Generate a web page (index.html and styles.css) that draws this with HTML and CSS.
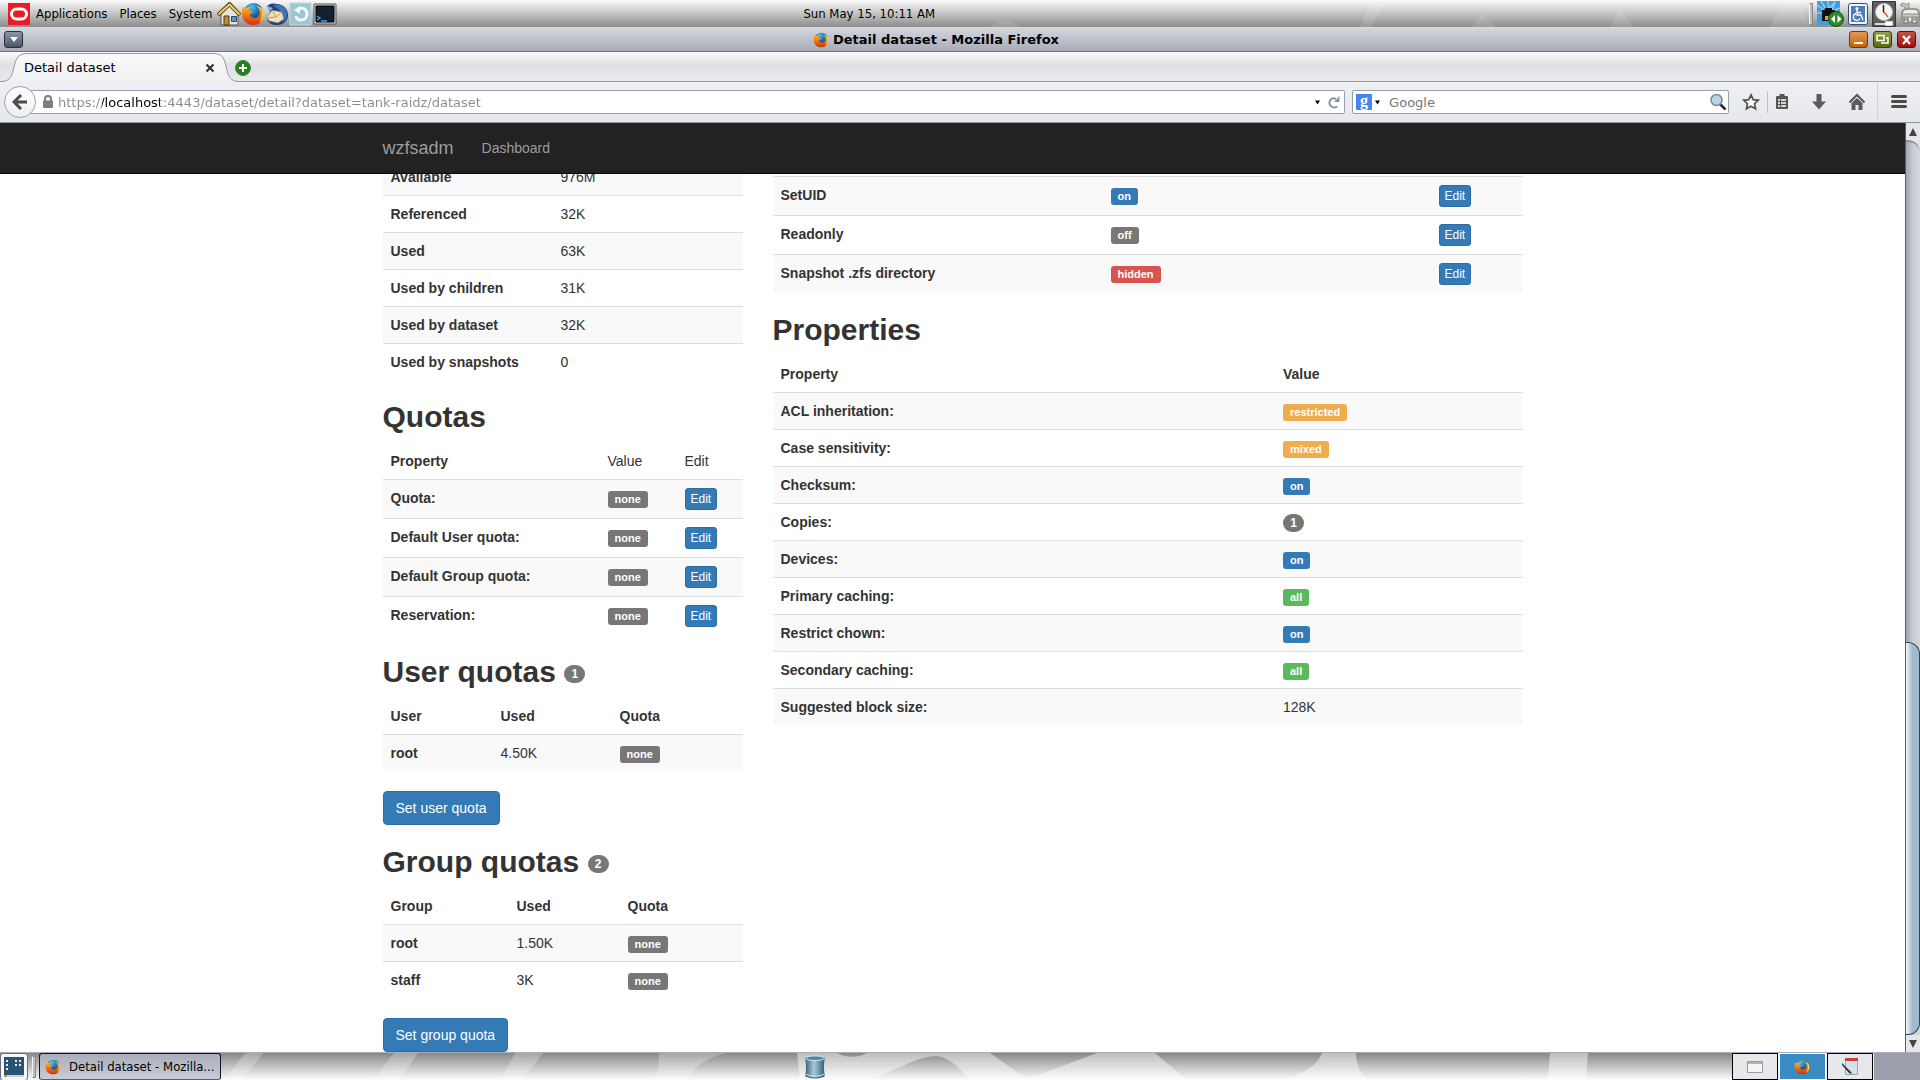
FILE: index.html
```html
<!DOCTYPE html>
<html lang="en">
<head>
<meta charset="utf-8">
<title>Detail dataset</title>
<link rel="stylesheet" href="styles.css">
</head>
<body>
<svg class="defs" width="0" height="0" aria-hidden="true">
  <defs>
    <linearGradient id="fx-fire" x1="0" y1="0" x2="0" y2="1"><stop offset="0" stop-color="#ffc52e"/><stop offset=".45" stop-color="#f57c16"/><stop offset="1" stop-color="#c9321a"/></linearGradient>
    <radialGradient id="fx-globe" cx=".4" cy=".2" r=".8"><stop offset="0" stop-color="#4fc0ee"/><stop offset=".5" stop-color="#1b6cb0"/><stop offset="1" stop-color="#0e2a5c"/></radialGradient>
    <linearGradient id="tab-fill" x1="0" y1="0" x2="0" y2="1"><stop offset="0" stop-color="#fafafb"/><stop offset="1" stop-color="#eeeff2"/></linearGradient>
    <linearGradient id="can-fill"><stop offset="0" stop-color="#3d6a85"/><stop offset=".45" stop-color="#a9cbdc"/><stop offset="1" stop-color="#35627e"/></linearGradient>
    <symbol id="firefox" viewBox="0 0 24 24">
      <circle cx="12.5" cy="11" r="10" fill="url(#fx-globe)"/>
      <path d="M2 4c.5 1 1 2 2 2.500C6 5 8 5 9.500 5.500 8 6.500 8 8 9 9l3 .5c0 1.500-2 2-3 3 0 3 4 4.500 7 3 2.500-1.500 3-4 2.500-6.500C18 6.500 17 5 15.500 3.500 21 5 23.500 9 23 13.500 22.500 19.500 18 23 12 23 5.500 23 1 18 1 12c0-3 .3-6 1-8z" fill="url(#fx-fire)"/>
      <path d="M19.500 4.500C24 9 24 17 18.500 20.500 21.500 16 22 9 19.500 4.500z" fill="#ffe04a"/>
    </symbol>
  </defs>
</svg>

<header class="panel">
  <svg class="panel-art" viewBox="0 0 1920 28" preserveAspectRatio="none" aria-hidden="true"><path d="M990 28q15-12 30 0zM1360 28l10-24h14l-12 24zM1472 28l10-14 14 14zM1610 28l10-20 14 20zM1770 28q16-40 30-24l10 24z" fill="#fff" opacity=".12"/></svg>
  <nav class="menus">
    <button class="menu oracle" aria-label="Main menu"><svg width="22" height="22" viewBox="0 0 22 22"><path fill="#ea1b22" d="M0 0h22v22H0z"/><rect x="3.500" y="6" width="15" height="10" rx="5" fill="none" stroke="#fff" stroke-width="3"/></svg></button>
    <button class="menu">Applications</button>
    <button class="menu">Places</button>
    <button class="menu">System</button>
  </nav>
  <div class="launchers">
    <button aria-label="Home"><svg width="24" height="24" viewBox="0 0 24 24"><path d="M4 12v11h17V12l-8.500-8z" fill="#e6e4dc" stroke="#555"/><path d="M7 14h5v9H7z" fill="#b98b41" stroke="#4d3a17"/><path d="M14.500 14.500h5v5h-5z" fill="#5b93c7" stroke="#234d79"/><path d="M1 13 12.500 2 23 13" fill="none" stroke="#5d4a10" stroke-width="4"/><path d="M1.500 12.500 12.500 2.500 22.500 12.500" fill="none" stroke="#e7cf73" stroke-width="2"/></svg></button>
    <button aria-label="Firefox"><svg width="24" height="24"><use href="#firefox"/></svg></button>
    <button aria-label="Thunderbird"><svg width="24" height="24" viewBox="0 0 24 24"><path d="M2 4C5 1 9 1 12 2c6 0 11 5 11 11 0 5-4 10-11 10-5 0-8-2-10-5l6-2z" fill="#1d3f86"/><path d="M8 3c7-2 13 2 14 8 0 5-2 8-5 10 1-5 1-10-3-13z" fill="#3f73bb"/><path d="M2 3c2 2 4 2 6 3L5 9C3 8 2 6 2 3z" fill="#7fb1e3"/><path d="m2 15 5-7 10 2 2 7-6 4-9-2z" fill="#f0dfbb" stroke="#7c6a4a" stroke-width=".6"/><path d="m7 8 4 7 6-5M11 15l-8 1" fill="none" stroke="#b99f6e"/></svg></button>
    <button aria-label="Updates"><svg width="24" height="24" viewBox="0 0 24 24"><path d="M1 1h21v22H1z" fill="#9cc6d4" stroke="#c4dce4"/><path d="M9 7c6-2 9 1 9 5s-3 6-6 6-5-2-5-4" fill="none" stroke="#f3fafc" stroke-width="3"/><path d="m5 8 6-4v8z" fill="#f3fafc"/></svg></button>
    <button aria-label="Terminal"><svg width="24" height="24" viewBox="0 0 24 24"><path d="M1 2h22v20H1z" fill="#d8d8d8" stroke="#555"/><path d="M3 4h18v16H3z" fill="#12202f" stroke="#000"/><path d="m4 14 3 2-3 2M8 19h6" fill="none" stroke="#3fa0ef" stroke-width="1.500"/></svg></button>
  </div>
  <div class="clock"><time>Sun May 15, 10:11 AM</time></div>
  <div class="tray">
    <span class="grip"></span>
    <svg width="27" height="26" viewBox="0 0 27 26"><path d="M0 0h23v24H0z" fill="#3f9fdc"/><path d="m11 0 1 8 6-7-3 9 8-3M0 4l7 5M4 0l4 7M0 12h6" stroke="#8fcdf2" stroke-width="1.500" fill="none"/><path d="M5 9h3V7h7v2h3v11H5z" fill="#111"/><path d="M8 15h7v4H8z" fill="#caa05a"/><circle cx="19" cy="18" r="7.500" fill="#2c8b26" stroke="#175214"/><path d="m18 14-4 4 4 4zM20.500 14l4 4-4 4z" fill="#fff"/></svg>
    <svg width="20" height="24" viewBox="0 0 20 24"><rect x=".5" y="1.500" width="19" height="21" rx="2" fill="#f0f4f8" stroke="#2d4d7c"/><path d="M3 4h14v16H3z" fill="#4f7db8"/><circle cx="9" cy="6.500" r="1.500" fill="#fff"/><path d="M9 8v5h4l2 5M9 10.500h4M8 11.500a3.500 3.500 0 1 0 4 5" fill="none" stroke="#fff" stroke-width="1.300"/></svg>
    <svg width="24" height="26" viewBox="0 0 24 26"><path d="M.5.500h23v25H.5z" fill="#5c5d5f" stroke="#333"/><circle cx="12" cy="11" r="8.500" fill="#f4f4f4" stroke="#bbb"/><path d="M11.500 4v7.500" stroke="#222" stroke-width="1.500"/><path d="m12 11 4 5" stroke="#d35b33" stroke-width="1.500"/><path d="M3 23h11M14 21h6v3h-6z" stroke="#fff" stroke-width="1.500" fill="#fff"/></svg>
    <svg width="20" height="26" viewBox="0 0 20 26"><path d="M2 20v-7q0-5 5-5h7q5 0 5 5v7M4 14v8h4v-8M12 14v8h5v-8" fill="#ededea" stroke="#84847f" stroke-width="1.500"/><path d="M1 3q4-2 5 1l3-2v5H5Q4 4 1 5zM2 13h17v3H2z" fill="#c9c9c5" stroke="#8f8f8a"/></svg>
  </div>
</header>

<section class="window">
  <div class="titlebar">
    <button class="win-btn win-menu" aria-label="Window menu"><svg width="19" height="17" viewBox="0 0 19 17"><path d="M6 6h8l-4 5z" fill="#fff"/></svg></button>
    <h1 class="win-title"><svg width="16" height="16"><use href="#firefox"/></svg>Detail dataset - Mozilla Firefox</h1>
    <div class="win-controls">
      <button class="win-btn win-min" aria-label="Minimize"><svg width="17" height="15" viewBox="0 0 17 15"><path d="M4 10h9v2H4z" fill="#fff"/></svg></button>
      <button class="win-btn win-max" aria-label="Restore"><svg width="17" height="15" viewBox="0 0 17 15"><path d="M3 3.500h7v5H3zM12 6h2v5H8v-1" fill="none" stroke="#fff" stroke-width="1.500"/></svg></button>
      <button class="win-btn win-close" aria-label="Close"><svg width="17" height="15" viewBox="0 0 17 15"><path d="m5 4 7 8M12 4l-7 8" stroke="#fff" stroke-width="2.200"/></svg></button>
    </div>
  </div>

  <div class="tabstrip">
    <div class="tab">
      <svg class="tab-shape" width="240" height="30" viewBox="0 0 240 30" aria-hidden="true"><path d="M0 29.500h1C11 29.500 12 23 14 15 16 6 18 1.500 28 1.500H213c10 0 11 5 13 13 2 9 4 15 13 15V30H0z" fill="url(#tab-fill)"/><path d="M0 29.500h1C11 29.500 12 23 14 15 16 6 18 1.500 28 1.500H213c10 0 11 5 13 13 2 9 4 15 13 15" fill="none" stroke="#97999c"/></svg>
      <span class="tab-label">Detail dataset</span>
      <button class="icon-btn" aria-label="Close tab"><svg width="10" height="10" viewBox="0 0 10 10"><path d="m1.500 1.500 7 7M8.500 1.500l-7 7" stroke="#333" stroke-width="2.200"/></svg></button>
    </div>
    <button class="icon-btn new-tab" aria-label="New tab"><svg width="16" height="16" viewBox="0 0 16 16"><circle cx="8" cy="8" r="7.500" fill="#23801c" stroke="#3f8a38"/><path d="M8 4v8M4 8h8" stroke="#fff" stroke-width="2"/></svg></button>
  </div>

  <div class="toolbar">
    <button class="back" aria-label="Back"><svg width="16" height="16" viewBox="0 0 16 16"><path d="M9 1 2 8l7 7M3 8h12" fill="none" stroke="#4c4c4c" stroke-width="3"/></svg></button>
    <div class="field urlbar">
      <svg width="12" height="14" viewBox="0 0 12 14"><path d="M3 6V4q0-3 3-3t3 3v2" fill="none" stroke="#7d7d7d" stroke-width="2"/><rect x="1" y="5.500" width="10" height="7.500" rx="1" fill="#7d7d7d"/></svg>
      <input class="url-input" aria-label="Address" value="https://localhost:4443/dataset/detail?dataset=tank-raidz/dataset">
      <button class="icon-btn" aria-label="History"><svg width="5" height="5" viewBox="0 0 6 5"><path d="M0 0h6L3 5z"/></svg></button>
      <button class="icon-btn reload" aria-label="Reload"><svg width="12" height="13" viewBox="0 0 12 13"><path d="M8 3C4 1 1 4 1.500 7.500 2 11 6 12.500 9.500 10.500" fill="none" stroke="#8595a3" stroke-width="2"/><path d="M6 6h5.500V0z" fill="#8595a3"/></svg></button>
    </div>
    <div class="field searchbar">
      <button class="icon-btn engine" aria-label="Search engine"><span class="g">g</span><svg width="5" height="5" viewBox="0 0 6 5"><path d="M0 0h6L3 5z"/></svg></button>
      <input class="search-input" aria-label="Search" placeholder="Google">
      <button class="icon-btn" aria-label="Go"><svg width="18" height="18" viewBox="0 0 18 18"><path d="m11 11 5.500 5.500" stroke="#2b2b2b" stroke-width="2.500"/><circle cx="7.500" cy="7" r="5.500" fill="#b7d5ea" stroke="#7e8890" stroke-width="1.500"/></svg></button>
    </div>
    <div class="tools">
      <button class="icon-btn" aria-label="Bookmark"><svg width="18" height="18" viewBox="0 0 18 18"><path d="m9 2 2.200 4.700 5 .6-3.700 3.400 1 5L9 13.200l-4.500 2.500 1-5L1.800 7.300l5-.6z" fill="#fff" stroke="#555" stroke-width="1.800"/></svg></button>
      <span class="split"></span>
      <button class="icon-btn" aria-label="Bookmarks list"><svg width="16" height="18" viewBox="0 0 16 18"><rect x="2" y="3" width="12" height="13" rx="1" fill="#555"/><path d="M5.500 1h5v4h-5z" fill="#555"/><path d="M4 7h2M7 7h5M4 10h2M7 10h5M4 13h2M7 13h5" stroke="#fff" stroke-width="1.600"/></svg></button>
      <button class="icon-btn" aria-label="Downloads"><svg width="16" height="18" viewBox="0 0 16 18"><path d="M5.500 1h5v7.500H15L8 16.500 1 8.500h4.500z" fill="#5c5c5c"/></svg></button>
      <button class="icon-btn" aria-label="Home page"><svg width="18" height="18" viewBox="0 0 18 18"><path d="M1.500 9.500 9 2l7.500 7.500" fill="none" stroke="#555" stroke-width="2"/><path d="M3.500 10 9 5l5.500 5v7h-4v-5h-3v5h-4z" fill="#5c5c5c"/></svg></button>
      <span class="rule"></span>
      <button class="icon-btn" aria-label="Menu"><svg width="16" height="18" viewBox="0 0 16 18"><path d="M1.500 3.500h13M1.500 8.500h13M1.500 13.500h13" stroke="#4a4a4a" stroke-width="3" stroke-linecap="round"/></svg></button>
    </div>
  </div>

  <div class="viewport">
    <div class="page">
      <nav class="navbar"><div class="container">
        <a class="brand" href="#">wzfsadm</a>
        <a class="nav-link" href="#">Dashboard</a>
      </div></nav>
      <main class="container content">
        <div class="col-side">
          <table class="table stats">
            <tbody>
              <tr><th scope="row">Available</th><td>976M</td></tr>
              <tr><th scope="row">Referenced</th><td>32K</td></tr>
              <tr><th scope="row">Used</th><td>63K</td></tr>
              <tr><th scope="row">Used by children</th><td>31K</td></tr>
              <tr><th scope="row">Used by dataset</th><td>32K</td></tr>
              <tr><th scope="row">Used by snapshots</th><td>0</td></tr>
            </tbody>
          </table>
          <h2>Quotas</h2>
          <table class="table quotas">
            <thead><tr><th>Property</th><td>Value</td><td>Edit</td></tr></thead>
            <tbody>
              <tr><th scope="row">Quota:</th><td><span class="label">none</span></td><td><button class="btn btn-xs">Edit</button></td></tr>
              <tr><th scope="row">Default User quota:</th><td><span class="label">none</span></td><td><button class="btn btn-xs">Edit</button></td></tr>
              <tr><th scope="row">Default Group quota:</th><td><span class="label">none</span></td><td><button class="btn btn-xs">Edit</button></td></tr>
              <tr><th scope="row">Reservation:</th><td><span class="label">none</span></td><td><button class="btn btn-xs">Edit</button></td></tr>
            </tbody>
          </table>
          <h2>User quotas <span class="badge">1</span></h2>
          <table class="table users">
            <thead><tr><th>User</th><th>Used</th><th>Quota</th></tr></thead>
            <tbody>
              <tr><th scope="row">root</th><td>4.50K</td><td><span class="label">none</span></td></tr>
            </tbody>
          </table>
          <button class="btn">Set user quota</button>
          <h2>Group quotas <span class="badge">2</span></h2>
          <table class="table groups">
            <thead><tr><th>Group</th><th>Used</th><th>Quota</th></tr></thead>
            <tbody>
              <tr><th scope="row">root</th><td>1.50K</td><td><span class="label">none</span></td></tr>
              <tr><th scope="row">staff</th><td>3K</td><td><span class="label">none</span></td></tr>
            </tbody>
          </table>
          <button class="btn">Set group quota</button>
        </div>
        <div class="col-main">
          <table class="table flags">
            <tbody>
              <tr><th scope="row">SetUID</th><td><span class="label primary">on</span></td><td><button class="btn btn-xs">Edit</button></td></tr>
              <tr><th scope="row">Readonly</th><td><span class="label">off</span></td><td><button class="btn btn-xs">Edit</button></td></tr>
              <tr><th scope="row">Snapshot .zfs directory</th><td><span class="label danger">hidden</span></td><td><button class="btn btn-xs">Edit</button></td></tr>
            </tbody>
          </table>
          <h2>Properties</h2>
          <table class="table props">
            <thead><tr><th>Property</th><th>Value</th></tr></thead>
            <tbody>
              <tr><th scope="row">ACL inheritation:</th><td><span class="label warning">restricted</span></td></tr>
              <tr><th scope="row">Case sensitivity:</th><td><span class="label warning">mixed</span></td></tr>
              <tr><th scope="row">Checksum:</th><td><span class="label primary">on</span></td></tr>
              <tr><th scope="row">Copies:</th><td><span class="badge">1</span></td></tr>
              <tr><th scope="row">Devices:</th><td><span class="label primary">on</span></td></tr>
              <tr><th scope="row">Primary caching:</th><td><span class="label success">all</span></td></tr>
              <tr><th scope="row">Restrict chown:</th><td><span class="label primary">on</span></td></tr>
              <tr><th scope="row">Secondary caching:</th><td><span class="label success">all</span></td></tr>
              <tr><th scope="row">Suggested block size:</th><td>128K</td></tr>
            </tbody>
          </table>
        </div>
      </main>
    </div>
    <div class="scrollbar" aria-hidden="true">
      <div class="arrow"><svg width="8" height="8" viewBox="0 0 8 8"><path d="M0 8h8L4 0z" fill="#444"/></svg></div>
      <div class="track"><div class="thumb"></div></div>
      <div class="arrow"><svg width="8" height="8" viewBox="0 0 8 8"><path d="M0 0h8L4 8z" fill="#444"/></svg></div>
    </div>
  </div>
</section>

<footer class="taskbar">
  <svg class="panel-art" viewBox="0 0 1920 28" preserveAspectRatio="none" aria-hidden="true"><g fill="#fff"><path d="M245 0h18l-20 27h-18zM394 0h24l-18 27h-26zM515 0h28l-20 27h-22zM658 0h68q-30 8-38 27h-33q6-18 3-27z" opacity=".25"/><path d="M797 0H837q15 8 30 0H990l30 22q8 5 20 0L1097 0H1155L1187 28H970Q950 3 936 3 925 3 910 10L870 28H800zM1322 0h34q0 20 14 28h-88q34-10 40-28zM1550 0h38l-2 28h-38z" opacity=".45"/></g></svg>
  <button class="show-desktop" aria-label="Show desktop"><svg width="20" height="20" viewBox="0 0 20 20"><path d="M0 0h20v20H0z" fill="#2c5273"/><path d="M2 3h2v2H2zM2 7h2v2H2zM2 11h2v2H2zM11 3h2v2h-2zM15 3h2v2h-2zM11 7h2v2h-2zM15 7h2v2h-2z" fill="#e9f0f5"/><path d="M3 18h17v2H3z" fill="#c9d2d9"/><path d="M0 18h3v2H0z" fill="#e8843c"/></svg></button>
  <span class="grip"></span>
  <button class="task"><svg width="16" height="16"><use href="#firefox"/></svg>Detail dataset - Mozilla...</button>
  <div class="dock">
    <button aria-label="Trash"><svg width="22" height="24" viewBox="0 0 22 26"><path d="M1 3q2 10 0 20 10 4 20 0-2-10 0-20z" fill="url(#can-fill)" stroke="#35566b"/><ellipse cx="11" cy="3.500" rx="10" ry="2.500" fill="#4e86a5" stroke="#dcebf2"/><path d="M1 21q10 4 20 0" fill="none" stroke="#dcebf2"/></svg></button>
  </div>
  <div class="workspaces">
    <button class="ws" aria-label="Workspace 1"><svg width="16" height="12" viewBox="0 0 16 12"><path d="M.5.500h15v11H.5z" fill="#f5f5f3" stroke="#9b9b9b"/><path d="M1 1h14v2H1z" fill="#b5b5b5"/></svg></button>
    <button class="ws active" aria-label="Workspace 2"><svg width="16" height="16"><use href="#firefox"/></svg></button>
    <button class="ws" aria-label="Workspace 3"><svg width="17" height="18" viewBox="0 0 17 18"><path d="M4.500.500h12v16h-12z" fill="#d5e0f2" stroke="#9aa"/><path d="M4 0h13v3H4z" fill="#c9403a"/><path d="m1 5 9 9 1 2-3-1-7-8z" fill="#333"/></svg></button>
    <button class="ws empty" aria-label="Workspace 4"></button>
  </div>
</footer>
</body>
</html>
```
FILE: styles.css
```css
* { box-sizing: border-box; }

body {
  margin: 0;
  min-height: 100vh;
  display: flex;
  flex-direction: column;
  font: 13px/16px "DejaVu Sans", sans-serif;
  color: #000;
  background: #fff;
}

button {
  margin: 0;
  padding: 0;
  border: 0;
  background: none;
  font: inherit;
  color: inherit;
}
svg { display: block; flex: none; }
.defs { position: absolute; }

/* Desktop panels */
.panel, .taskbar {
  position: relative;
  display: flex;
  align-items: center;
  font-family: "DejaVu Sans Condensed", "DejaVu Sans", sans-serif;
  font-stretch: condensed;
}
.panel {
  height: 27px;
  background: linear-gradient(#fafafa, #c4c4c4 50%, #8c8c8c);
}
.panel > *, .taskbar > * { position: relative; }
.panel > .panel-art, .taskbar > .panel-art {
  position: absolute;
  inset: 0;
  width: 100%;
  height: 100%;
}
.menus { display: flex; align-items: center; gap: 12px; padding-left: 8px; }
.oracle { margin-right: -6px; }
.launchers { display: flex; padding-left: 5px; }
.clock, .dock { flex: 1; display: flex; }
.clock::before { content: ""; flex: 8; }
.clock::after { content: ""; flex: 15; }
.dock::before { content: ""; flex: 9; }
.dock::after { content: ""; flex: 14; }
.tray { display: flex; align-items: center; gap: 4px; }
.grip {
  width: 4px;
  height: 22px;
  border: 1px solid #8a8a8a;
  border-left-color: #f4f4f4;
  background: #bdbdbd;
}

/* Browser window */
.window { flex: 1; display: flex; flex-direction: column; }
.titlebar {
  height: 25px;
  padding: 0 4px;
  display: flex;
  align-items: center;
  justify-content: space-between;
  border-top: 1px solid #d9dbdf;
  border-bottom: 1px solid #6d7180;
  background: linear-gradient(#d3d6dc, #a8acb9);
}
.win-title {
  margin: 0;
  display: flex;
  align-items: center;
  gap: 4px;
  font: bold 13px/16px "DejaVu Sans", sans-serif;
}
.win-controls { display: flex; gap: 5px; }
.win-btn { border: 1px solid #333; border-radius: 3px; }
.win-menu { border-color: #273043; background: linear-gradient(#8d95a5, #4c566b); }
.win-menu svg { margin: -1px; }
.win-min { border-color: #7d3500; background: linear-gradient(#e29a55, #c96000); }
.win-max { border-color: #33420a; background: linear-gradient(#93a04a, #566b00); }
.win-close { border-color: #5d0d0d; background: linear-gradient(#c9514b, #a00d0d); }

.tabstrip {
  height: 30px;
  display: flex;
  align-items: center;
  border-bottom: 1px solid #97999c;
  background: linear-gradient(#fbfbfc, #dfe0e5 45%, #e9eaec);
}
.tab {
  position: relative;
  width: 240px;
  height: 30px;
  padding: 2px 25px 0 24px;
  display: flex;
  align-items: center;
  justify-content: space-between;
}
.tab > * { position: relative; }
.tab > .tab-shape { position: absolute; left: 0; top: 0; }
.new-tab { margin-left: -5px; padding-top: 2px; }

.toolbar {
  height: 41px;
  padding: 0 13px 0 4px;
  display: flex;
  align-items: center;
  border-bottom: 1px solid #8f93a6;
  background: linear-gradient(#eeeff2, #e6e8eb);
}
.back {
  position: relative;
  width: 32px;
  height: 32px;
  display: grid;
  place-items: center;
  border: 1px solid #9aa3b0;
  border-radius: 50%;
  background: linear-gradient(#fff, #eceef1);
}
.field {
  height: 24px;
  display: flex;
  align-items: center;
  border: 1px solid #989daa;
  border-radius: 2px;
  background: #fff;
}
.field input {
  flex: 1;
  min-width: 0;
  height: 22px;
  padding: 0;
  border: 0;
  outline: 0;
  font: inherit;
}
.urlbar { flex: 7 1 0; margin-left: -6px; padding: 0 4px 0 11px; gap: 4px; }
.url-input {
  color: transparent;
  background: linear-gradient(90deg, #8a8a8a 44px, #000 44px 102px, #8a8a8a 102px);
  -webkit-background-clip: text;
  background-clip: text;
}
.reload { padding-left: 4px; }
.searchbar { flex: 2 1 0; margin-left: 7px; padding: 0 1px 0 3px; gap: 9px; }
.engine { display: flex; align-items: center; gap: 3px; }
.g {
  width: 16px;
  height: 16px;
  border-radius: 1px;
  background: #4285f4;
  color: #fff;
  font: bold 16px/13px "Liberation Serif", serif;
  text-align: center;
}
.search-input::placeholder { color: #777; opacity: 1; }
.tools { display: flex; align-items: center; padding-left: 13px; }
.tools .icon-btn + .icon-btn { margin-left: 21px; }
.split { width: 1px; height: 22px; margin: 0 6px 0 7px; background: #bfc3ca; }
.rule { width: 1px; height: 38px; margin: 0 13px 0 11px; background: #cfd2d8; }

/* Web page */
.viewport {
  flex: 1;
  display: flex;
  font: 14px/20px "Liberation Sans", Arial, sans-serif;
  color: #333;
}
.page { position: relative; flex: 1; background: #fff; }
.container { max-width: 1170px; margin: 0 auto; padding: 0 15px; }
.navbar {
  position: absolute;
  inset: 0 0 auto;
  border-bottom: 1px solid #080808;
  background: #222;
}
.navbar .container { height: 50px; display: flex; align-items: center; gap: 28px; }
.brand { font-size: 18px; }
.brand, .nav-link { color: #9d9d9d; text-decoration: none; }
.content { display: grid; grid-template-columns: 360px 1fr; gap: 30px; }
.col-side { padding-top: 35px; }
.col-main { padding-top: 53px; }

h2 { margin: 20px 0 10px; font-size: 30px; line-height: 33px; font-weight: bold; }
.table {
  width: 100%;
  margin-bottom: 20px;
  table-layout: fixed;
  border-spacing: 0;
}
.table th, .table td {
  padding: 8px;
  text-align: left;
  vertical-align: top;
}
.table tbody th, .table tbody td { border-top: 1px solid #ddd; }
.table tbody tr:nth-child(odd) { background: #f9f9f9; }
.stats th { width: 170px; }
.quotas th { width: 217px; }
.quotas td:nth-child(2) { width: 77px; }
.users th:first-child { width: 110px; }
.users th:nth-child(2) { width: 119px; }
.groups th:first-child { width: 126px; }
.groups th:nth-child(2) { width: 111px; }
.flags th { width: 44%; }
.flags td:nth-child(2) { width: 328px; }
.props th:first-child { width: 67%; }

.label, .badge {
  display: inline-block;
  background: #777;
  color: #fff;
  font-weight: bold;
  text-align: center;
  vertical-align: bottom;
}
.label { padding: 0 7px; border-radius: 3px; font-size: 11px; line-height: 17px; }
.badge { min-width: 21px; padding: 0 7px; border-radius: 9px; font-size: 12px; line-height: 18px; }
h2 .badge { vertical-align: middle; }
.primary { background: #337ab7; }
.success { background: #5cb85c; }
.warning { background: #f0ad4e; }
.danger { background: #d9534f; }
.btn {
  display: block;
  padding: 6px 12px;
  border: 1px solid #2e6da4;
  border-radius: 4px;
  background: #337ab7;
  color: #fff;
  line-height: 20px;
}
.btn-xs { padding: 1px 5px; border-radius: 3px; font-size: 12px; line-height: 18px; }

.scrollbar {
  width: 15px;
  display: flex;
  flex-direction: column;
  border-left: 1px solid #5d5f68;
  background: #e4e6ea;
}
.arrow { height: 17px; display: grid; place-items: center; }
.track {
  flex: 1;
  display: flex;
  align-items: flex-end;
  border-top: 2px solid #8e9095;
  border-radius: 0 12px 0 0;
  background: linear-gradient(90deg, #a3a5ab, #c9ccd2 50%, #d4d6dc);
}
.thumb {
  width: 100%;
  height: 44%;
  border: 1px solid #2d4458;
  border-left: 0;
  border-radius: 0 12px 12px 0;
  background: linear-gradient(90deg, #f2f6f9, #a2b8cc 50%, #a2b8cc);
}

/* Taskbar */
.taskbar {
  height: 28px;
  border-top: 1px solid #a9acb8;
  background: linear-gradient(#868888, #fdfdfd);
}
.show-desktop {
  padding: 3px;
  border: 1px solid #6b6e78;
  border-radius: 3px;
  background: #f7f7f7;
}
.taskbar .grip { margin: 0 3px 0 4px; }
.task {
  width: 182px;
  height: 27px;
  padding-left: 5px;
  display: flex;
  align-items: center;
  gap: 8px;
  white-space: nowrap;
  border: 1px solid #14161c;
  border-bottom-color: #5a5e6e;
  border-radius: 3px;
  background: linear-gradient(#a9adba, #c8ccd6);
}
.workspaces {
  width: 188px;
  height: 27px;
  display: grid;
  grid-template-columns: repeat(4, 1fr);
  gap: 1px;
  background: #f0f0f2;
}
.ws {
  display: grid;
  place-items: center;
  border: 1px solid #000;
  background: #e7e8ec;
}
.ws.active { border-color: #fff; background: #3a8ac4; }
.ws.empty { border: 0; background: #9c9eac; }
```
